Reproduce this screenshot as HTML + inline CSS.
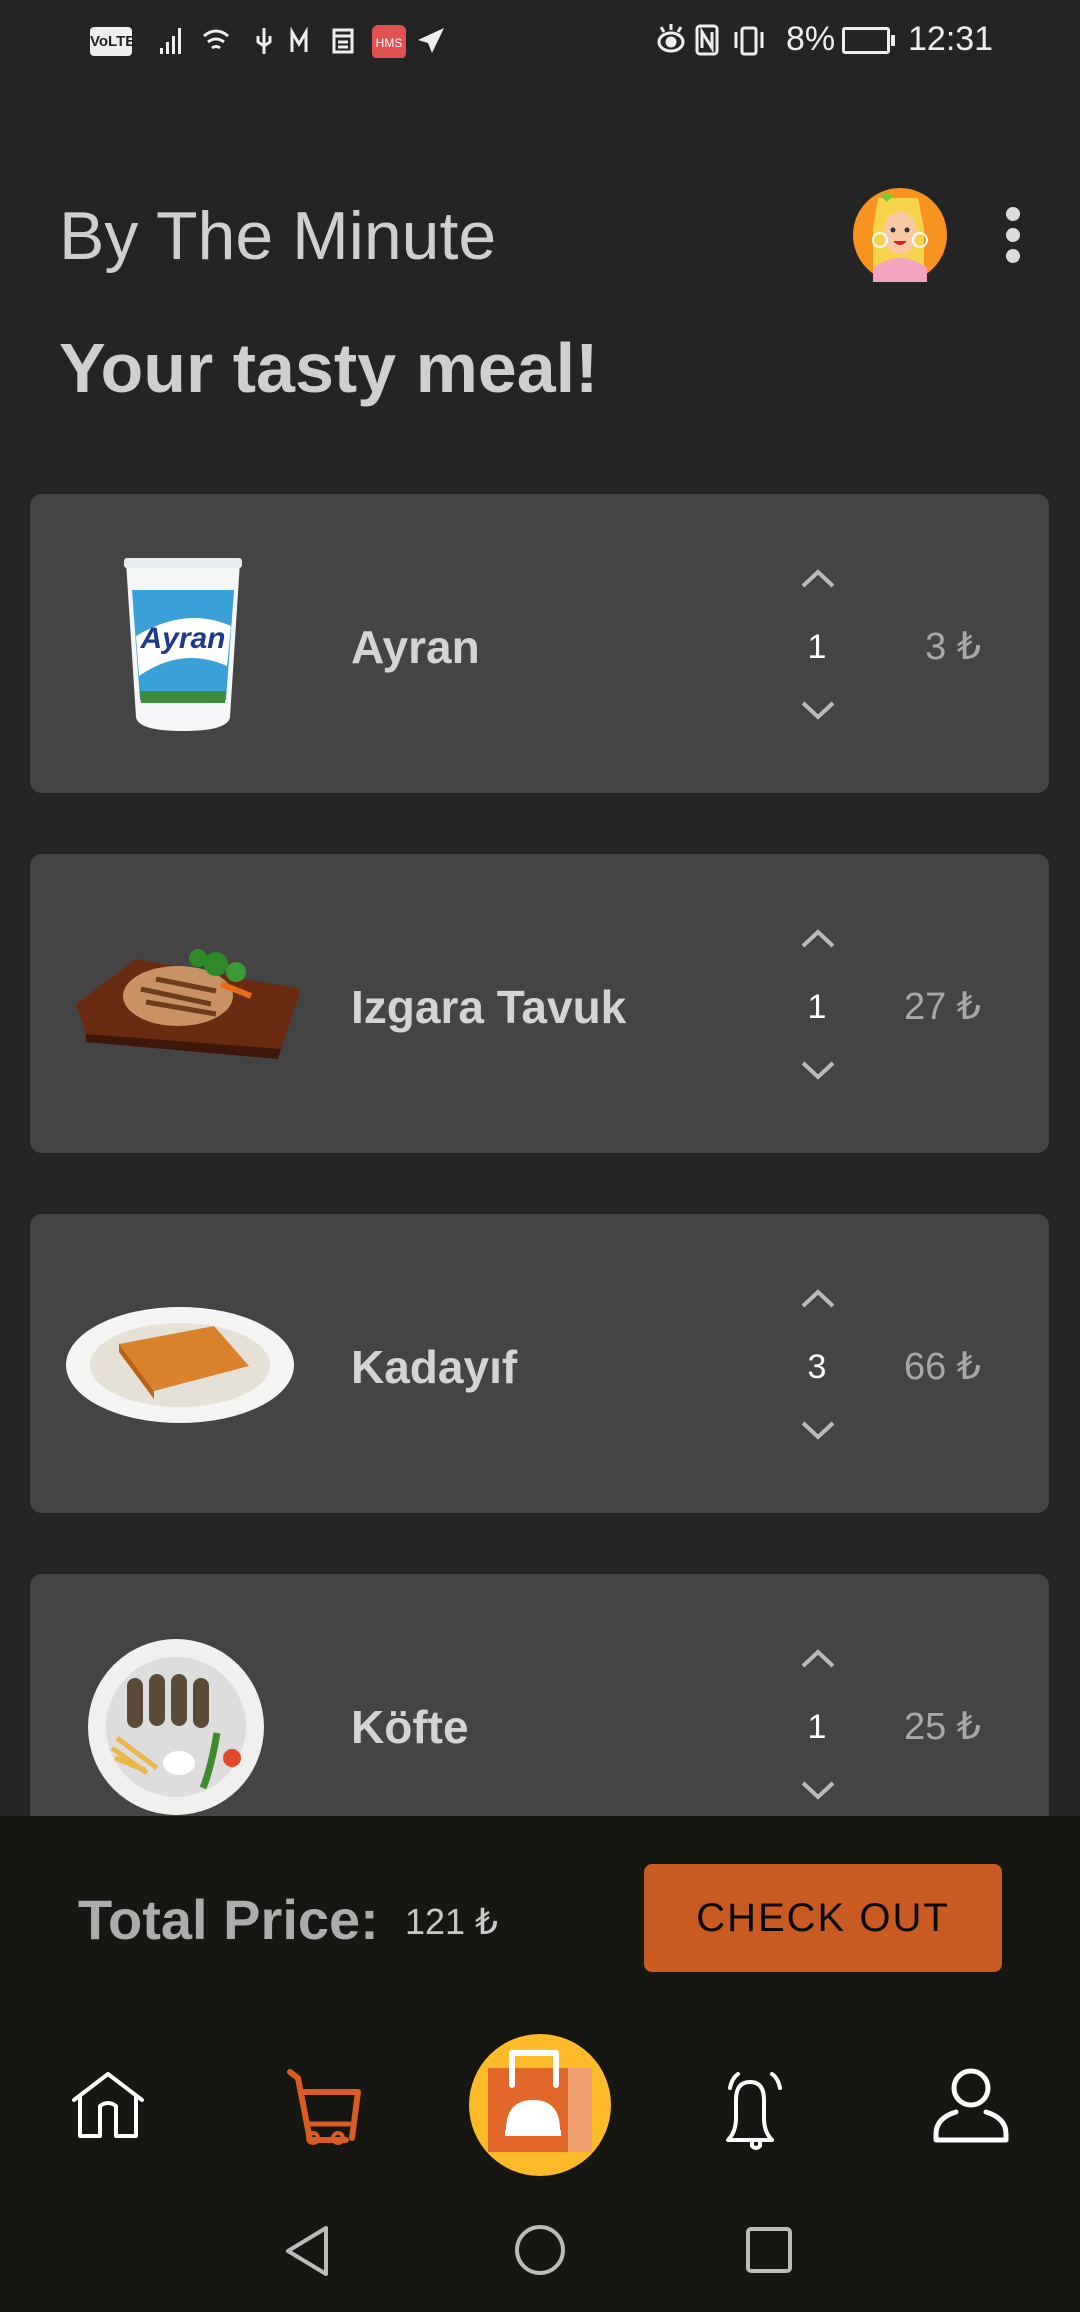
<!DOCTYPE html>
<html><head><meta charset="utf-8"><style>
*{margin:0;padding:0;box-sizing:border-box}
body{width:1080px;height:2312px;background:#242424;position:relative;overflow:hidden;font-family:"Liberation Sans",sans-serif}
.abs{position:absolute}
.card{position:absolute;left:30px;width:1019px;height:299px;background:#444;border-radius:12px}
.name{position:absolute;left:321px;top:125px;font-size:46px;font-weight:bold;color:#d4d4d4;line-height:56px}
.qty{position:absolute;left:770px;width:34px;text-align:center;top:128px;font-size:34px;color:#fff;line-height:50px}
.price{position:absolute;right:68px;top:125px;font-size:38px;color:#a8a8a8;line-height:56px}
.arr{position:absolute;left:770px;width:36px;height:20px}
</style></head><body>
<!-- status bar -->
<div class="abs" style="left:90px;top:27px;width:42px;height:29px;background:#eee;border-radius:4px;font-size:15px;font-weight:bold;color:#222;text-align:center;line-height:29px">VoLTE</div>
<svg class="abs" style="left:158px;top:22px" width="300" height="36" viewBox="0 0 300 36" fill="none" stroke="#eee" stroke-width="3">
<g fill="#eee" stroke="none"><rect x="2" y="26" width="3" height="6"/><rect x="8" y="20" width="3" height="12"/><rect x="14" y="14" width="3" height="18"/><rect x="20" y="6" width="3" height="26"/></g>
<path d="M46 14q12-10 24 0M50 20q8-6 16 0M54 26q4-3 8 0"/>
<path d="M106 6v26M100 14v6l6 4l6-4v-6"/>
<path d="M134 30V10l7 12l7-12v20"/>
<rect x="176" y="8" width="18" height="22"/><path d="M176 14h18M180 20h10M180 25h10"/>
<rect x="214" y="3" width="34" height="34" rx="6" fill="#e05252" stroke="none"/><text x="231" y="25" font-size="12" fill="#fff" stroke="none" text-anchor="middle" font-family="Liberation Sans">HMS</text>
<path d="M286 6l-26 12l10 3l4 10z" fill="#eee" stroke="none"/>
</svg>
<svg class="abs" style="left:650px;top:22px" width="250" height="36" viewBox="0 0 250 36" fill="none" stroke="#eee" stroke-width="3">
<ellipse cx="21" cy="20" rx="12" ry="9"/><circle cx="21" cy="20" r="4" fill="#eee"/><path d="M21 2v6M11 5l3 5M31 5l-3 5"/>
<rect x="47" y="4" width="20" height="28" rx="3"/><path d="M52 26V10l10 16V10"/>
<rect x="92" y="6" width="14" height="26" rx="2"/><path d="M86 10v16M112 10v16"/>
</svg>
<div class="abs" style="left:786px;top:20px;font-size:34px;color:#eee">8%</div>
<div class="abs" style="left:842px;top:27px;width:48px;height:27px;border:3px solid #eee;border-radius:3px"></div>
<div class="abs" style="left:891px;top:35px;width:4px;height:11px;background:#eee"></div>
<div class="abs" style="left:908px;top:20px;font-size:34px;color:#eee">12:31</div>

<!-- header -->
<div class="abs" style="left:59px;top:196px;font-size:68px;color:#cfcfcf;line-height:80px">By The Minute</div>
<svg class="abs" style="left:853px;top:188px" width="94" height="94" viewBox="0 0 94 94">
<circle cx="47" cy="47" r="47" fill="#f7931e"/><path d="M25 10h40l6 30v50H20V40z" fill="#f6d34a"/>
<ellipse cx="47" cy="45" rx="17" ry="21" fill="#f9c9a4"/><circle cx="40" cy="42" r="2.5" fill="#234"/><circle cx="54" cy="42" r="2.5" fill="#234"/>
<path d="M40 53q7 8 14 0z" fill="#d22"/><circle cx="27" cy="52" r="7" fill="none" stroke="#fff" stroke-width="2"/><circle cx="67" cy="52" r="7" fill="none" stroke="#fff" stroke-width="2"/>
<path d="M20 80q27-20 54 0v14H20z" fill="#f3a3c0"/><path d="M28 8q6-6 12 0l-6 6z" fill="#7c3"/></svg>
<div class="abs" style="left:1006px;top:207px;width:14px;height:14px;border-radius:50%;background:#ddd"></div>
<div class="abs" style="left:1006px;top:228px;width:14px;height:14px;border-radius:50%;background:#ddd"></div>
<div class="abs" style="left:1006px;top:249px;width:14px;height:14px;border-radius:50%;background:#ddd"></div>
<div class="abs" style="left:59px;top:328px;font-size:70px;font-weight:bold;color:#cfcfcf;line-height:80px">Your tasty meal!</div>

<!-- cards -->
<div class="card" style="top:494px">
 <svg class="abs" style="left:88px;top:62px" width="130" height="180" viewBox="0 0 130 180">
 <path d="M8 6h114l-10 155q-2 14-47 14t-47-14z" fill="#f4f6f8"/><path d="M14 34h102l-8 110H22z" fill="#3aa0d8"/><path d="M18 80q50-30 95-10l-4 40q-45-20-88 10z" fill="#fff"/><text x="65" y="92" font-size="30" font-weight="bold" fill="#1d3a8a" text-anchor="middle" font-family="Liberation Sans" font-style="italic">Ayran</text><path d="M22 135h86l-1 12H23z" fill="#3b8a3e"/><rect x="6" y="2" width="118" height="10" rx="3" fill="#e8ecf0"/></svg>
 <div class="name">Ayran</div>
 <svg class="arr" style="top:74px" viewBox="0 0 36 20"><path d="M3 18L18 4l15 14" fill="none" stroke="#bbb" stroke-width="4"/></svg>
 <div class="qty">1</div>
 <svg class="arr" style="top:207px" viewBox="0 0 36 20"><path d="M3 2l15 14L33 2" fill="none" stroke="#bbb" stroke-width="4"/></svg>
 <div class="price">3 ₺</div>
</div>
<div class="card" style="top:854px">
 <svg class="abs" style="left:36px;top:80px" width="240" height="130" viewBox="0 0 240 130">
 <path d="M10 70l60-45l165 30l-20 60L20 100z" fill="#6b2a12"/><path d="M20 100l195 15l-3 10L20 108z" fill="#3e170a"/><ellipse cx="112" cy="62" rx="55" ry="30" fill="#c89262"/><path d="M75 55l70 15M80 68l70 12M90 45l60 12" stroke="#6d3c1c" stroke-width="5"/><circle cx="150" cy="30" r="12" fill="#2f8a2a"/><circle cx="170" cy="38" r="10" fill="#3a9a33"/><circle cx="132" cy="24" r="9" fill="#2f8a2a"/><path d="M155 50l30 12" stroke="#e86b1a" stroke-width="6"/></svg>
 <div class="name">Izgara Tavuk</div>
 <svg class="arr" style="top:74px" viewBox="0 0 36 20"><path d="M3 18L18 4l15 14" fill="none" stroke="#bbb" stroke-width="4"/></svg>
 <div class="qty">1</div>
 <svg class="arr" style="top:207px" viewBox="0 0 36 20"><path d="M3 2l15 14L33 2" fill="none" stroke="#bbb" stroke-width="4"/></svg>
 <div class="price">27 ₺</div>
</div>
<div class="card" style="top:1214px">
 <svg class="abs" style="left:34px;top:90px" width="232" height="122" viewBox="0 0 232 122">
 <ellipse cx="116" cy="61" rx="114" ry="58" fill="#f4f4f2"/><ellipse cx="116" cy="61" rx="90" ry="42" fill="#e6e1d6"/><path d="M55 40l95-18l35 40l-95 25z" fill="#d9822b"/><path d="M55 40l35 47v8L55 48z" fill="#b86418"/></svg>
 <div class="name">Kadayıf</div>
 <svg class="arr" style="top:74px" viewBox="0 0 36 20"><path d="M3 18L18 4l15 14" fill="none" stroke="#bbb" stroke-width="4"/></svg>
 <div class="qty">3</div>
 <svg class="arr" style="top:207px" viewBox="0 0 36 20"><path d="M3 2l15 14L33 2" fill="none" stroke="#bbb" stroke-width="4"/></svg>
 <div class="price">66 ₺</div>
</div>
<div class="card" style="top:1574px">
 <svg class="abs" style="left:57px;top:64px" width="178" height="178" viewBox="0 0 178 178">
 <circle cx="89" cy="89" r="88" fill="#f0f0ee"/><circle cx="89" cy="89" r="70" fill="#ddd"/><g fill="#5b4a36"><rect x="40" y="40" width="16" height="50" rx="8"/><rect x="62" y="36" width="16" height="52" rx="8"/><rect x="84" y="36" width="16" height="52" rx="8"/><rect x="106" y="40" width="16" height="50" rx="8"/></g><path d="M25 110l35 25M30 100l40 30M28 120l30 12" stroke="#e8b74a" stroke-width="5"/><ellipse cx="92" cy="125" rx="16" ry="12" fill="#fff"/><path d="M130 95q-6 35-14 55" stroke="#3f8a2f" stroke-width="7" fill="none"/><circle cx="145" cy="120" r="9" fill="#e04a2a"/></svg>
 <div class="name">Köfte</div>
 <svg class="arr" style="top:74px" viewBox="0 0 36 20"><path d="M3 18L18 4l15 14" fill="none" stroke="#bbb" stroke-width="4"/></svg>
 <div class="qty">1</div>
 <svg class="arr" style="top:207px" viewBox="0 0 36 20"><path d="M3 2l15 14L33 2" fill="none" stroke="#bbb" stroke-width="4"/></svg>
 <div class="price">25 ₺</div>
</div>

<!-- bottom -->
<div class="abs" style="left:0;top:1816px;width:1080px;height:496px;background:#161613"></div>
<div class="abs" style="left:78px;top:1888px;font-size:56px;font-weight:bold;color:#acacac;line-height:64px">Total Price:</div>
<div class="abs" style="left:405px;top:1900px;font-size:36px;color:#c8c8c8;line-height:44px">121 ₺</div>
<div class="abs" style="left:644px;top:1864px;width:358px;height:108px;background:#c85a22;border-radius:8px;color:#0a0a0a;font-size:40px;line-height:108px;text-align:center;letter-spacing:2px">CHECK OUT</div>

<svg class="abs" style="left:0;top:2030px" width="1080" height="160" viewBox="0 2030 1080 160" fill="none" stroke-linejoin="round" stroke-linecap="round">
<path d="M74 2100L108 2074L142 2100M80 2096v40h20v-30q8-6 16 0v30h20v-40" stroke="#fff" stroke-width="4"/>
<path d="M290 2072l8 6l12 62h36M304 2092h54l-6 46" stroke="#d85c24" stroke-width="6"/><path d="M307 2124h42" stroke="#d85c24" stroke-width="5"/><circle cx="313" cy="2138" r="5" stroke="#d85c24" stroke-width="4"/><circle cx="338" cy="2138" r="5" stroke="#d85c24" stroke-width="4"/>
<circle cx="540" cy="2105" r="71" fill="#fdbb2a" stroke="none"/>
<rect x="488" y="2068" width="104" height="84" fill="#e2672a" stroke="none"/><rect x="568" y="2068" width="24" height="84" fill="#f0a070" stroke="none"/><path d="M512 2085v-32h44v32" stroke="#fff" stroke-width="6"/>
<path d="M506 2130q0-30 27-30q27 0 27 30z" fill="#fff" stroke="none"/><rect x="505" y="2130" width="56" height="6" fill="#fff" stroke="none"/>
<path d="M740 2140h32q-8-8-8-22v-18q0-18-14-18q-14 0-14 18v18q0 14-8 22zM738 2140h34M752 2140v6q4 4 8 0v-6M730 2088q2-10 8-14M780 2088q-2-10-8-14" stroke="#fff" stroke-width="4"/>
<circle cx="971" cy="2088" r="17" stroke="#fff" stroke-width="5"/><path d="M956 2112q-20 6-20 22v6h70v-6q0-16-20-22" stroke="#fff" stroke-width="5"/>
</svg>
<svg class="abs" style="left:0;top:2220px" width="1080" height="60" viewBox="0 2220 1080 60" fill="none" stroke="#bbb" stroke-width="4" stroke-linejoin="round">
<path d="M326 2228v46l-38-23z"/><circle cx="540" cy="2250" r="23"/><rect x="748" y="2229" width="42" height="42" rx="3"/>
</svg>
</body></html>
